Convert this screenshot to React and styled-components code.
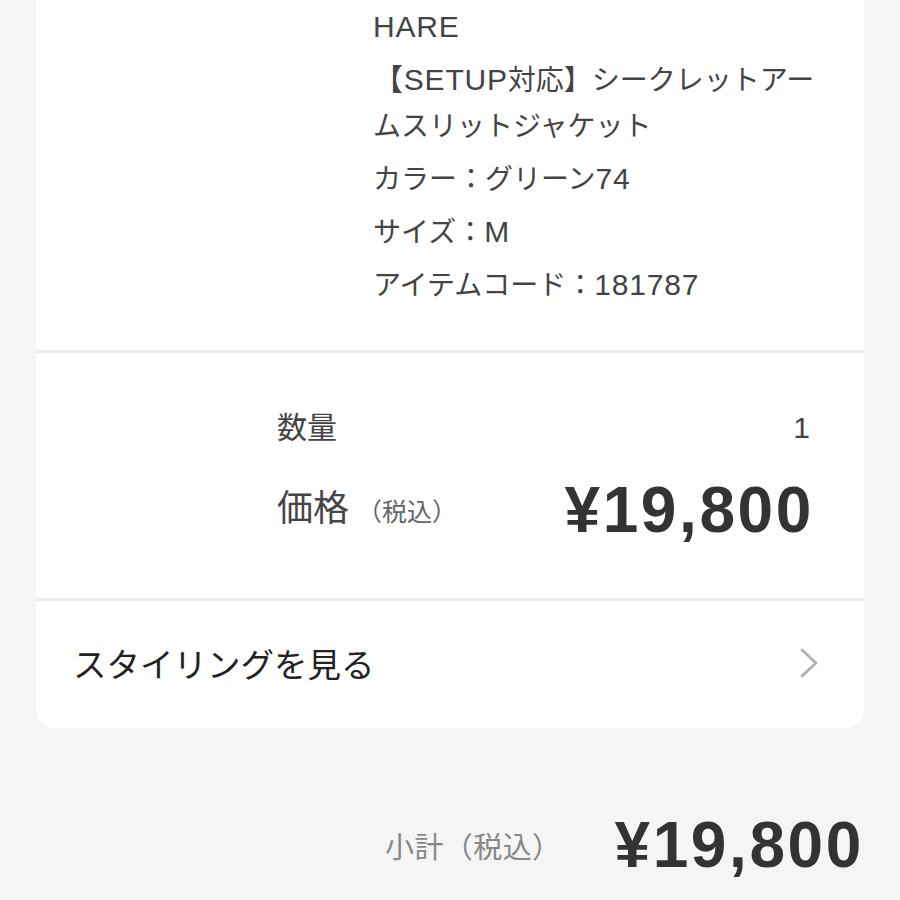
import React from "react";
import styled, { createGlobalStyle } from "styled-components";

const Global = createGlobalStyle`
  html, body { margin: 0; padding: 0; background: #f5f5f5; }
  body { font-family: "Liberation Sans", "Noto Sans CJK JP", sans-serif; color: #333; }
`;

const Page = styled.div`
  width: 900px;
  height: 900px;
  overflow: hidden;
  background: #f5f5f5;
  box-sizing: border-box;
  padding: 0 36px;
`;

const Card = styled.div`
  background: #fff;
  border-radius: 0 0 18px 18px;
  overflow: hidden;
`;

const Divider = styled.div`
  height: 3px;
  background: #ededed;
`;

const InfoSection = styled.div`
  padding: 5px 40px 41px 337px;
  display: flex;
  flex-direction: column;
  gap: 7px;
`;

const InfoLine = styled.div`
  font-size: 28px;
  line-height: 46px;
  height: ${(p) => (p.$lines || 1) * 46}px;
  color: #444;
`;

const Latin = styled.span`
  font-size: 30px;
  line-height: 1;
  letter-spacing: 0.8px;
`;

const PriceSection = styled.div`
  padding: 55px 52px 0 241px;
  height: 245px;
  box-sizing: border-box;
  display: flex;
  flex-direction: column;
  gap: 27px;
`;

const Row = styled.div`
  display: flex;
  align-items: center;
  justify-content: space-between;
  height: ${(p) => p.$h}px;
`;

const Label = styled.div`
  font-size: ${(p) => p.$size}px;
  line-height: ${(p) => p.$lh}px;
  color: #444;
  display: flex;
  align-items: baseline;
`;

const Note = styled.span`
  font-size: 25px;
  color: #666;
  margin-left: 8px;
`;

const Qty = styled.div`
  font-size: 30px;
  line-height: 40px;
  color: #444;
  margin-right: 2px;
`;

const Price = styled.div`
  font-size: 64px;
  line-height: 70px;
  font-weight: 700;
  color: #333;
  letter-spacing: 2.6px;
  margin-right: -2px;
`;

const LinkRow = styled.div`
  height: 127px;
  box-sizing: border-box;
  padding: 0 44px 4px 37px;
  display: flex;
  align-items: center;
  justify-content: space-between;
`;

const LinkText = styled.div`
  font-size: 33.5px;
  color: #222;
`;

const Subtotal = styled.div`
  display: flex;
  justify-content: flex-end;
  align-items: center;
  gap: 53px;
  padding: 82px 2px 0 0;
`;

const SubLabel = styled.div`
  font-size: 29px;
  color: #888;
  letter-spacing: 0.4px;
`;

const Chevron = () => (
  <svg width="22" height="32" viewBox="0 0 22 32">
    <polyline points="4,3 18,16 4,29" fill="none" stroke="#b0b0b0" strokeWidth="2.8" strokeLinecap="round" strokeLinejoin="round" />
  </svg>
);

export default function App() {
  return (
    <>
      <Global />
      <Page>
        <Card>
          <InfoSection>
            <InfoLine><Latin>HARE</Latin></InfoLine>
            <InfoLine $lines={2}><Latin>【SETUP</Latin>対応】シークレットアームスリットジャケット</InfoLine>
            <InfoLine>カラー：グリーン<Latin>74</Latin></InfoLine>
            <InfoLine>サイズ：<Latin>M</Latin></InfoLine>
            <InfoLine>アイテムコード：<Latin>181787</Latin></InfoLine>
          </InfoSection>
          <Divider />
          <PriceSection>
            <Row $h={40}>
              <Label $size={30} $lh={40}>数量</Label>
              <Qty>1</Qty>
            </Row>
            <Row $h={70}>
              <Label $size={36} $lh={70}>
                価格<Note>（税込）</Note>
              </Label>
              <Price>¥19,800</Price>
            </Row>
          </PriceSection>
          <Divider />
          <LinkRow>
            <LinkText>スタイリングを見る</LinkText>
            <Chevron />
          </LinkRow>
        </Card>
        <Subtotal>
          <SubLabel>小計（税込）</SubLabel>
          <Price>¥19,800</Price>
        </Subtotal>
      </Page>
    </>
  );
}
